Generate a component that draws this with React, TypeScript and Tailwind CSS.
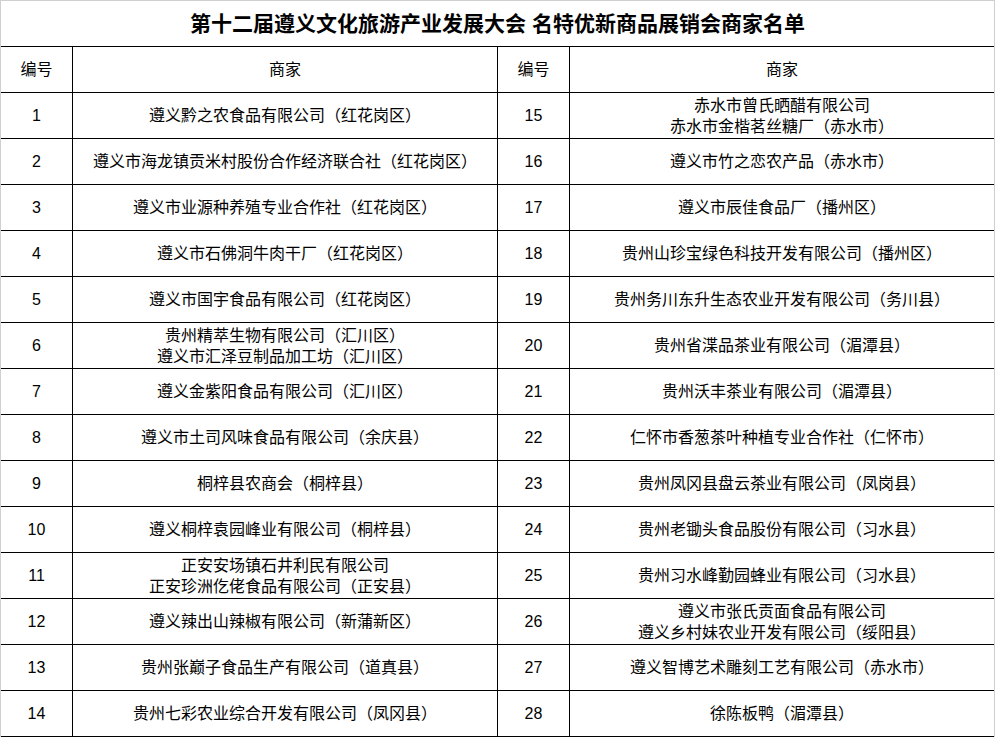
import React from "react";

type Row = { n: number; lines: string[] };

const left: Row[] = [
  { n: 1, lines: ["遵义黔之农食品有限公司（红花岗区）"] },
  { n: 2, lines: ["遵义市海龙镇贡米村股份合作经济联合社（红花岗区）"] },
  { n: 3, lines: ["遵义市业源种养殖专业合作社（红花岗区）"] },
  { n: 4, lines: ["遵义市石佛洞牛肉干厂（红花岗区）"] },
  { n: 5, lines: ["遵义市国宇食品有限公司（红花岗区）"] },
  { n: 6, lines: ["贵州精萃生物有限公司（汇川区）", "遵义市汇泽豆制品加工坊（汇川区）"] },
  { n: 7, lines: ["遵义金紫阳食品有限公司（汇川区）"] },
  { n: 8, lines: ["遵义市土司风味食品有限公司（余庆县）"] },
  { n: 9, lines: ["桐梓县农商会（桐梓县）"] },
  { n: 10, lines: ["遵义桐梓袁园峰业有限公司（桐梓县）"] },
  { n: 11, lines: ["正安安场镇石井利民有限公司", "正安珍洲仡佬食品有限公司（正安县）"] },
  { n: 12, lines: ["遵义辣出山辣椒有限公司（新蒲新区）"] },
  { n: 13, lines: ["贵州张巅子食品生产有限公司（道真县）"] },
  { n: 14, lines: ["贵州七彩农业综合开发有限公司（凤冈县）"] },
];

const right: Row[] = [
  { n: 15, lines: ["赤水市曾氏晒醋有限公司", "赤水市金楷茗丝糖厂（赤水市）"] },
  { n: 16, lines: ["遵义市竹之恋农产品（赤水市）"] },
  { n: 17, lines: ["遵义市辰佳食品厂（播州区）"] },
  { n: 18, lines: ["贵州山珍宝绿色科技开发有限公司（播州区）"] },
  { n: 19, lines: ["贵州务川东升生态农业开发有限公司（务川县）"] },
  { n: 20, lines: ["贵州省渫品茶业有限公司（湄潭县）"] },
  { n: 21, lines: ["贵州沃丰茶业有限公司（湄潭县）"] },
  { n: 22, lines: ["仁怀市香葱茶叶种植专业合作社（仁怀市）"] },
  { n: 23, lines: ["贵州凤冈县盘云茶业有限公司（凤岗县）"] },
  { n: 24, lines: ["贵州老锄头食品股份有限公司（习水县）"] },
  { n: 25, lines: ["贵州习水峰勤园蜂业有限公司（习水县）"] },
  { n: 26, lines: ["遵义市张氏贡面食品有限公司", "遵义乡村妹农业开发有限公司（绥阳县）"] },
  { n: 27, lines: ["遵义智博艺术雕刻工艺有限公司（赤水市）"] },
  { n: 28, lines: ["徐陈板鸭（湄潭县）"] },
];

function Cell({ children, first }: { children: React.ReactNode; first?: boolean }) {
  return (
    <div
      className={
        "flex flex-col items-center justify-center text-center leading-[21px] " +
        (first ? "" : "border-l border-black")
      }
    >
      {children}
    </div>
  );
}

export default function App() {
  return (
    <div
      className="w-[995px] h-[737px] bg-white text-black text-[16px]"
      style={{ fontFamily: '"Liberation Sans", "Noto Sans CJK SC", sans-serif' }}
    >
      <div className="w-[995px] border-l border-r border-t border-[#cfcfcf]">
        <div className="h-[45px] flex items-center justify-center text-[21px] font-bold">
          第十二届遵义文化旅游产业发展大会 名特优新商品展销会商家名单
        </div>
        <div className="grid grid-cols-[71px_425px_72px_425px] h-[46px] border-t border-black">
          <Cell first>编号</Cell>
          <Cell>商家</Cell>
          <Cell>编号</Cell>
          <Cell>商家</Cell>
        </div>
        {left.map((l, i) => {
          const r = right[i];
          return (
            <div
              key={l.n}
              className={
                "grid grid-cols-[71px_425px_72px_425px] h-[46px] border-t border-black" +
                (i === left.length - 1 ? " border-b h-[47px]" : "")
              }
            >
              <Cell first>{l.n}</Cell>
              <Cell>
                {l.lines.map((t) => (
                  <div key={t}>{t}</div>
                ))}
              </Cell>
              <Cell>{r.n}</Cell>
              <Cell>
                {r.lines.map((t) => (
                  <div key={t}>{t}</div>
                ))}
              </Cell>
            </div>
          );
        })}
      </div>
    </div>
  );
}
